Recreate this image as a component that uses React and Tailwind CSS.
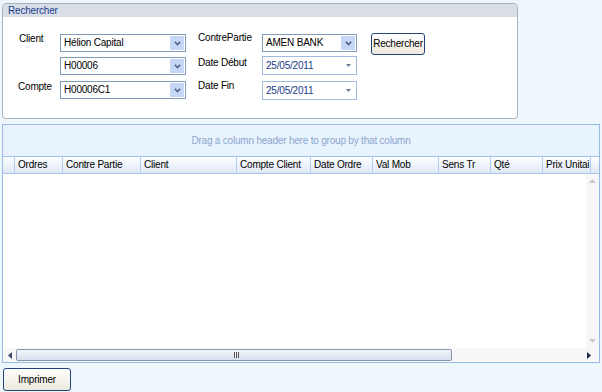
export default function App() {
  const cols = [
    { name: "", w: 11 },
    { name: "Ordres", w: 48 },
    { name: "Contre Partie", w: 78 },
    { name: "Client", w: 96 },
    { name: "Compte Client", w: 74 },
    { name: "Date Ordre", w: 62 },
    { name: "Val Mob", w: 66 },
    { name: "Sens Tr", w: 52 },
    { name: "Qté", w: 52 },
    { name: "Prix Unitai", w: 49 },
  ];

  return (
    <div className="w-[602px] h-[392px] bg-[#eef7fc] overflow-hidden text-[10px] tracking-[-0.2px] text-black font-['Liberation_Sans',Arial,sans-serif] leading-none">
      {/* Rechercher group */}
      <div className="ml-[2px] mt-[3px] w-[516px] h-[116px] border border-[#a9b1bf] rounded-[4px] bg-white overflow-hidden">
        <div className="h-[13px] bg-[#d9dde6] pl-[5px] flex items-center text-[#1d3f8f]">Rechercher</div>
        <div className="pt-[17px] flex">
          <div className="grid grid-cols-[57px_126px] grid-rows-[23px_24px_18px]">
            <div className="pl-[16px] pt-0">Client</div>
            <Combo value="Hélion Capital" />
            <div />
            <Combo value="H00006" />
            <div className="pl-[15px] pt-[1px]">Compte</div>
            <Combo value="H00006C1" />
          </div>
          <div className="grid grid-cols-[76px_95px] grid-rows-[22px_25px_18px]">
            <div className="pl-[12px] -mt-[1px]">ContrePartie</div>
            <Combo value="AMEN BANK" />
            <div className="pl-[12px] pt-[2px]">Date Début</div>
            <DateBox value="25/05/2011" />
            <div className="pl-[12px] pt-0">Date Fin</div>
            <DateBox value="25/05/2011" />
          </div>
          <div className="ml-[14px] -mt-[1px]">
            <Button label="Rechercher" className="w-[54px] h-[22px]" />
          </div>
        </div>
      </div>

      {/* Grid */}
      <div className="ml-[2px] mt-[5px] w-[598px] h-[239px] border border-[#98bbe6] bg-white flex flex-col overflow-hidden">
        <div className="h-[32px] bg-[#e9f3fd] border-b border-[#a3c2ea] flex items-center justify-center text-[#8ba7cf]">
          Drag a column header here to group by that column
        </div>
        <div className="h-[17px] flex bg-gradient-to-b from-[#ffffff] to-[#dde8f6] border-b border-[#a9c5ea] overflow-hidden">
          {cols.map((c, i) => (
            <div
              key={i}
              className={`shrink-0 h-full flex items-center whitespace-nowrap overflow-hidden ${i > 0 ? "border-l border-[#b5cdee] pl-[3px]" : ""} ${i === cols.length - 1 ? "border-r" : ""}`}
              style={{ width: c.w }}
            >
              {c.name}
            </div>
          ))}
        </div>
        <div className="flex-1 flex">
          <div className="flex-1" />
          <div className="w-[13px] bg-[#f7f7f7] flex flex-col items-center justify-between py-[5px]">
            <svg width="7" height="4" viewBox="0 0 7 4"><path d="M3.5 0L7 4H0z" fill="#c8c8c8" /></svg>
            <svg width="7" height="4" viewBox="0 0 7 4"><path d="M0 0h7L3.5 4z" fill="#c8c8c8" /></svg>
          </div>
        </div>
        <div className="h-[14px] flex items-center bg-[#f7f7f7]">
          <div className="w-[13px] flex justify-center">
            <svg width="4" height="7" viewBox="0 0 4 7"><path d="M4 0v7L0 3.5z" fill="#3a4a66" /></svg>
          </div>
          <div className="w-[436px] h-[12px] border border-[#8795ae] rounded-[2px] bg-gradient-to-b from-[#f2f5fa] to-[#d6e0ee] flex items-center justify-center">
            <div className="flex gap-[1px] ml-[4px]">
              <div className="w-[1px] h-[6px] bg-[#555]" />
              <div className="w-[1px] h-[6px] bg-[#555]" />
              <div className="w-[1px] h-[6px] bg-[#555]" />
            </div>
          </div>
          <div className="flex-1" />
          <div className="w-[20px] flex justify-center">
            <svg width="4" height="7" viewBox="0 0 4 7"><path d="M0 0v7L4 3.5z" fill="#1a2a44" /></svg>
          </div>
        </div>
      </div>

      <div className="ml-[3px] mt-[5px]">
        <Button label="Imprimer" className="w-[68px] h-[23px]" />
      </div>
    </div>
  );
}

function Combo({ value }) {
  return (
    <div className="h-[18px] border border-[#7f9db9] bg-white flex items-center">
      <span className="flex-1 pl-[3px] whitespace-nowrap">{value}</span>
      <div className="w-[14px] h-[14px] mr-[1px] bg-[#c6d6f7] rounded-[1px] flex items-center justify-center">
        <svg width="7" height="5" viewBox="0 0 7 5">
          <path d="M0.8 0.8L3.5 3.5L6.2 0.8" stroke="#4d6185" strokeWidth="1.6" fill="none" />
        </svg>
      </div>
    </div>
  );
}

function DateBox({ value }) {
  return (
    <div className="h-[19px] border border-[#9fbbe0] bg-white flex items-center">
      <span className="flex-1 pl-[3px] text-[#183a86]">{value}</span>
      <svg className="mr-[5px]" width="5" height="3" viewBox="0 0 5 3">
        <path d="M0 0h5L2.5 3z" fill="#6d7c95" />
      </svg>
    </div>
  );
}

function Button({ label, className }) {
  return (
    <div className={`border border-[#23447d] rounded-[3px] bg-gradient-to-b from-[#ffffff] to-[#ede9dc] flex items-center justify-center ${className}`}>
      {label}
    </div>
  );
}
